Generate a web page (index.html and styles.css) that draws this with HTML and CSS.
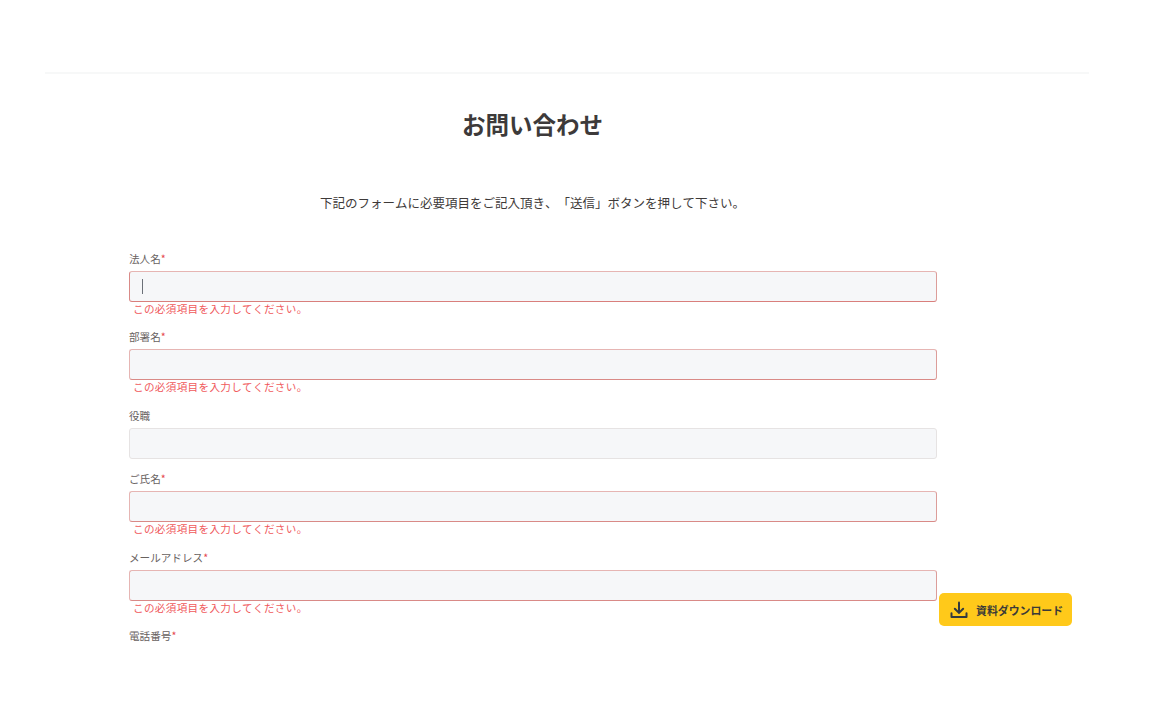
FILE: index.html
```html
<!DOCTYPE html>
<html lang="ja">
<head>
<meta charset="utf-8">
<title>お問い合わせ</title>
<link rel="stylesheet" href="styles.css">
</head>
<body>
<main class="page">
  <div class="rule"></div>
  <h1 class="title">お問い合わせ</h1>
  <p class="intro">下記のフォームに必要項目をご記入頂き、「送信」ボタンを押して下さい。</p>
  <form class="form">
    <div class="field">
      <label class="label">法人名<span class="req">*</span></label>
      <div class="input invalid focus"><span class="caret"></span></div>
      <p class="error">この必須項目を入力してください。</p>
    </div>
    <div class="field">
      <label class="label">部署名<span class="req">*</span></label>
      <div class="input invalid"></div>
      <p class="error">この必須項目を入力してください。</p>
    </div>
    <div class="field">
      <label class="label">役職</label>
      <div class="input"></div>
    </div>
    <div class="field">
      <label class="label">ご氏名<span class="req">*</span></label>
      <div class="input invalid"></div>
      <p class="error">この必須項目を入力してください。</p>
    </div>
    <div class="field">
      <label class="label">メールアドレス<span class="req">*</span></label>
      <div class="input invalid"></div>
      <p class="error">この必須項目を入力してください。</p>
    </div>
    <div class="field">
      <label class="label">電話番号<span class="req">*</span></label>
    </div>
  </form>
</main>
<a class="download">
  <svg class="download-icon" viewBox="0 0 24 24" width="20" height="20" fill="none" stroke="#333a40" stroke-width="2.4" stroke-linecap="round" stroke-linejoin="round">
    <path d="M12 3v12"/>
    <path d="M7 10.5l5 5 5-5"/>
    <path d="M3 16v4.5h18V16"/>
  </svg>
  <span>資料ダウンロード</span>
</a>
</body>
</html>
```
FILE: styles.css
```css
* { box-sizing: border-box; }
html, body { margin: 0; height: 100%; overflow: hidden; background: #fff; }
body {
  font-family: "Noto Sans CJK JP", "Noto Sans", sans-serif;
  color: #3e3a39;
  text-spacing-trim: space-all;
  font-kerning: none;
}
.page {
  width: 1044px;
  margin-left: 45px;
  padding-top: 72px;
}
.rule { height: 2px; background: #f7f8f8; }
.title {
  margin: 30px 0 0 0;
  height: 40px;
  line-height: 40px;
  font-size: 23.5px;
  font-weight: 700;
  text-align: center;
  color: #3d3a3a;
  padding-right: 69px;
}
.intro {
  margin: 47px 0 0 0;
  height: 24px;
  line-height: 24px;
  font-size: 12.5px;
  text-align: center;
  padding-right: 69px;
  color: #3e3a39;
}
.form {
  width: 808px;
  margin: 35px 0 0 84px;
  display: flex;
  flex-direction: column;
}
.field { display: flex; flex-direction: column; margin-bottom: 11.4px; }
.label {
  height: 18px;
  line-height: 18px;
  font-size: 10.6px;
  color: #68625f;
}
.req { color: #e5484d; }
.input {
  height: 31px;
  background: #f6f7f9;
  border: 1px solid #e6e3e3;
  border-radius: 3px;
  display: flex;
  align-items: center;
  padding-left: 12px;
  margin-top: 3px;
}
.invalid { border-color: #e6b5b3; border-bottom-color: #d98a87; border-right-color: #dc9d9a; }
.focus { border-bottom-color: #d97f7c; border-left-color: #d98a87; }
.caret { width: 1px; height: 15px; background: #6b7078; }
.error {
  margin: 0;
  padding-left: 4px;
  height: 15px;
  line-height: 13px;
  font-size: 10.6px;
  letter-spacing: 0.03em;
  color: #f0595c;
}
.download {
  position: fixed;
  left: 939px;
  top: 593px;
  width: 133px;
  height: 33px;
  background: #ffc91a;
  border-radius: 5px;
  display: flex;
  align-items: center;
  gap: 7px;
  padding-left: 10px;
  font-size: 10.9px;
  font-weight: 700;
  color: #3a3a38;
}
.download-icon { flex: none; }
```
